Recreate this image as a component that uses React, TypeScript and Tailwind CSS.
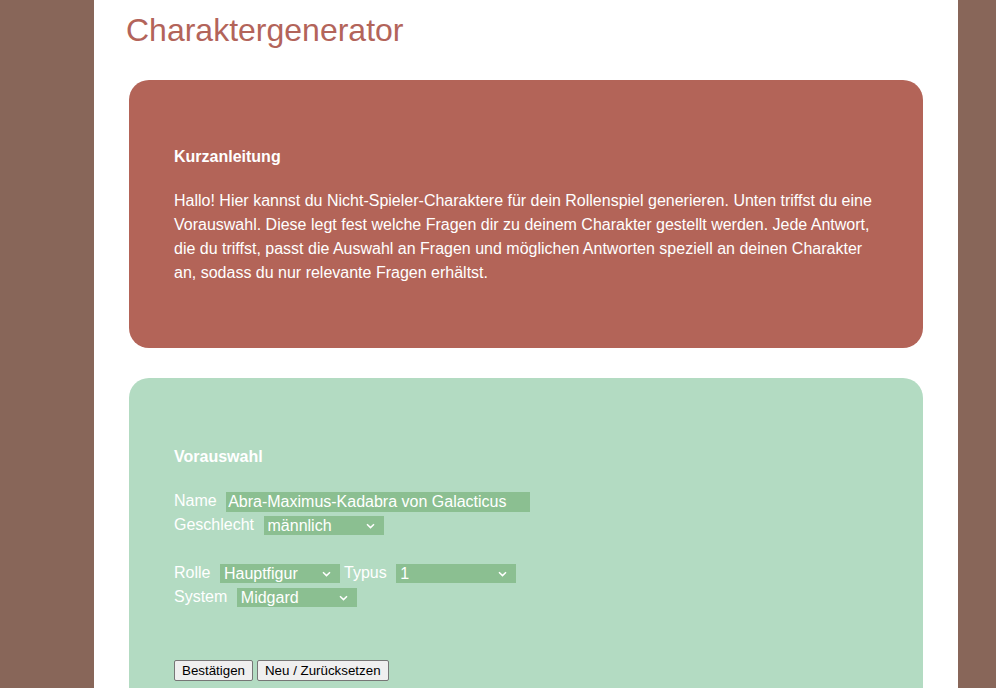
import { useState } from 'react';

function Chevron() {
  return (
    <svg
      className="pointer-events-none absolute right-[9px] top-1/2 -translate-y-1/2"
      width="9"
      height="6"
      viewBox="0 0 9 6"
      fill="none"
    >
      <path d="M1 1.2L4.5 4.6L8 1.2" stroke="white" strokeWidth="1.5" />
    </svg>
  );
}

function GreenSelect({
  value,
  options,
  onChange,
}: {
  value: string;
  options: string[];
  onChange: (v: string) => void;
}) {
  return (
    <span className="relative ml-[5px] inline-block align-middle">
      <select
        value={value}
        onChange={(e) => onChange(e.target.value)}
        className="block h-[19px] w-[120px] appearance-none bg-[#8bbf91] pl-[4px] text-[16px] leading-[19px] text-white outline-none"
      >
        {options.map((o) => (
          <option key={o} value={o} className="text-black">
            {o}
          </option>
        ))}
      </select>
      <Chevron />
    </span>
  );
}

export default function App() {
  const [name, setName] = useState('Abra-Maximus-Kadabra von Galacticus');
  const [gender, setGender] = useState('männlich');
  const [role, setRole] = useState('Hauptfigur');
  const [typus, setTypus] = useState('1');
  const [system, setSystem] = useState('Midgard');

  const reset = () => {
    setName('');
    setGender('männlich');
    setRole('Hauptfigur');
    setTypus('1');
    setSystem('Midgard');
  };

  return (
    <div className="min-h-screen bg-[#886659] font-['Liberation_Sans',Arial,sans-serif]">
      <div className="ml-[94px] min-h-screen w-[864px] bg-white px-[35px] pt-[12px] pb-10">
        {/* Titel */}
        <h1 className="-ml-[3px] text-[32px] leading-[37px] text-[#b3645a]">Charaktergenerator</h1>

        {/* Kurzanleitung */}
        <div className="mt-[31px] rounded-[20px] bg-[#b36458] px-[45px] pt-[65px] pb-[63px] text-white">
          <h3 className="text-[16px] font-bold leading-6">Kurzanleitung</h3>
          <p className="mt-[20px] text-[16px] leading-6">
            Hallo! Hier kannst du Nicht-Spieler-Charaktere für dein Rollenspiel generieren. Unten triffst du eine
            Vorauswahl. Diese legt fest welche Fragen dir zu deinem Charakter gestellt werden. Jede Antwort, die du
            triffst, passt die Auswahl an Fragen und möglichen Antworten speziell an deinen Charakter an, sodass du
            nur relevante Fragen erhältst.
          </p>
        </div>

        {/* Vorauswahl */}
        <div className="mt-[30px] rounded-[20px] bg-[#b3dbc2] px-[45px] pt-[67px] pb-[40px] text-white">
          <h3 className="text-[16px] font-bold leading-6">Vorauswahl</h3>

          <div className="mt-[20px] text-[16px] leading-6">
            <div>
              Name{' '}
              <input
                value={name}
                onChange={(e) => setName(e.target.value)}
                className="ml-[5px] inline-block h-[20px] w-[304px] bg-[#8bbf91] px-[2px] align-middle text-[16px] leading-[20px] text-white outline-none"
              />
            </div>
            <div>
              Geschlecht{' '}
              <GreenSelect value={gender} options={['männlich', 'weiblich', 'divers']} onChange={setGender} />
            </div>
            <div className="h-6" />
            <div>
              Rolle{' '}
              <GreenSelect value={role} options={['Hauptfigur', 'Nebenfigur', 'Statist']} onChange={setRole} />{' '}
              Typus{' '}
              <GreenSelect value={typus} options={['1', '2', '3']} onChange={setTypus} />
            </div>
            <div>
              System{' '}
              <GreenSelect value={system} options={['Midgard', 'DSA', 'D&D']} onChange={setSystem} />
            </div>
          </div>

          <div className="mt-[51px] flex gap-[4px] text-[13.33px] text-black">
            <button className="h-[21px] rounded-[2px] border border-[#767676] bg-[#efefef] px-[7px] leading-[19px]">
              Bestätigen
            </button>
            <button
              onClick={reset}
              className="h-[21px] rounded-[2px] border border-[#767676] bg-[#efefef] px-[7px] leading-[19px]"
            >
              Neu / Zurücksetzen
            </button>
          </div>
        </div>
      </div>
    </div>
  );
}
